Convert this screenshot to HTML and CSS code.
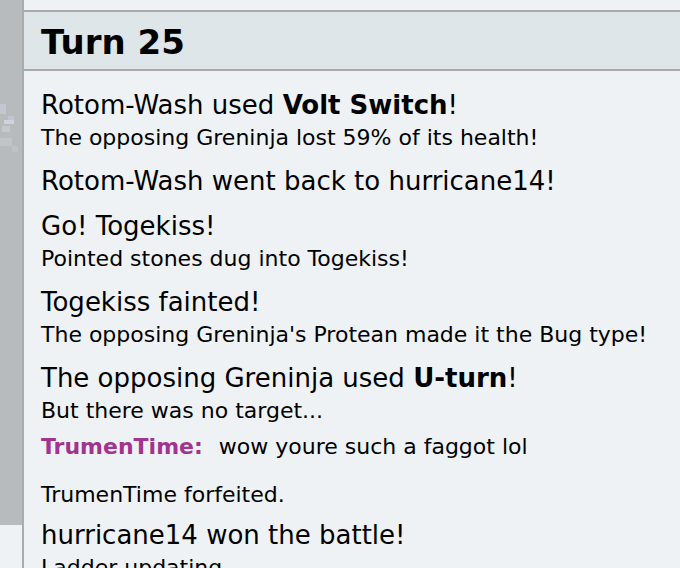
FILE: index.html
```html
<!DOCTYPE html>
<html lang="en">
<head>
  <meta charset="UTF-8">
  <meta name="viewport" content="width=device-width, initial-scale=1.0">
  <title>Battle Log</title>
  <link rel="stylesheet" href="styles.css">
</head>
<body>
  <div class="page">
    <div class="field">
      <svg class="sprite" width="22" height="80" viewBox="0 0 22 80">
        <rect x="0" y="14" width="6" height="10" fill="#c9ccd6" opacity="0.7"/>
        <rect x="4" y="30" width="10" height="4" fill="#d6d8e4" opacity="0.8"/>
        <rect x="8" y="26" width="6" height="4" fill="#c3c8dc" opacity="0.8"/>
        <rect x="2" y="36" width="8" height="6" fill="#cfd1d8" opacity="0.6"/>
        <rect x="0" y="48" width="12" height="8" fill="#c6c9cf" opacity="0.6"/>
        <rect x="12" y="56" width="6" height="6" fill="#c8cad0" opacity="0.5"/>
      </svg>
    </div>

    <div class="log">
      <h2 class="turn">Turn 25</h2>

      <div class="msg">Rotom-Wash used <strong>Volt Switch</strong>!<small>The opposing Greninja lost 59% of its health!</small></div>
      <div class="msg">Rotom-Wash went back to hurricane14!</div>
      <div class="msg">Go! Togekiss!<small>Pointed stones dug into Togekiss!</small></div>
      <div class="msg">Togekiss fainted!<small>The opposing Greninja's Protean made it the Bug type!</small></div>
      <div class="msg">The opposing Greninja used <strong>U-turn</strong>!<small>But there was no target...</small></div>
      <div class="chat"><strong class="user">TrumenTime:</strong> <em>wow youre such a faggot lol</em></div>
      <div class="msg"><small>TrumenTime forfeited.</small></div>
      <div class="msg win">hurricane14 won the battle!<small>Ladder updating...</small></div>
    </div>
  </div>
</body>
</html>
```

FILE: styles.css
```css
body {
  margin: 0;
  padding: 0;
  background-color: #eef2f5;
  font-family: "DejaVu Sans", Verdana, sans-serif;
  color: #000000;
  overflow: hidden;
}

.page {
  display: flex;
  align-items: flex-start;
  height: 568px;
}

.field {
  width: 22px;
  height: 525px;
  background-color: #b8bbbe;
  flex-shrink: 0;
}

.sprite {
  display: block;
  margin-top: 90px;
}

.log {
  flex: 1;
  height: 568px;
  border-left: 2px solid #a9acaf;
  padding-top: 10px;
  box-sizing: border-box;
}

.turn {
  margin: 0 0 6px 0;
  padding: 4px 17px 1px;
  line-height: 52px;
  font-size: 34px;
  font-weight: bold;
  background-color: #dfe6e9;
  border-top: 2px solid #aaaaaa;
  border-bottom: 2px solid #aaaaaa;
}

.msg {
  padding: 11px 17px 0;
  font-size: 26px;
  line-height: 34px;
  white-space: nowrap;
}

.msg.win {
  padding-top: 8px;
}

.msg small {
  display: block;
  font-size: 22px;
  line-height: 31px;
}

.chat {
  padding: 5px 17px 6px;
  font-size: 22px;
  line-height: 31px;
  white-space: nowrap;
}

.chat .user {
  color: #a2338f;
  margin-right: 9px;
}

.chat em {
  font-style: normal;
}
```
